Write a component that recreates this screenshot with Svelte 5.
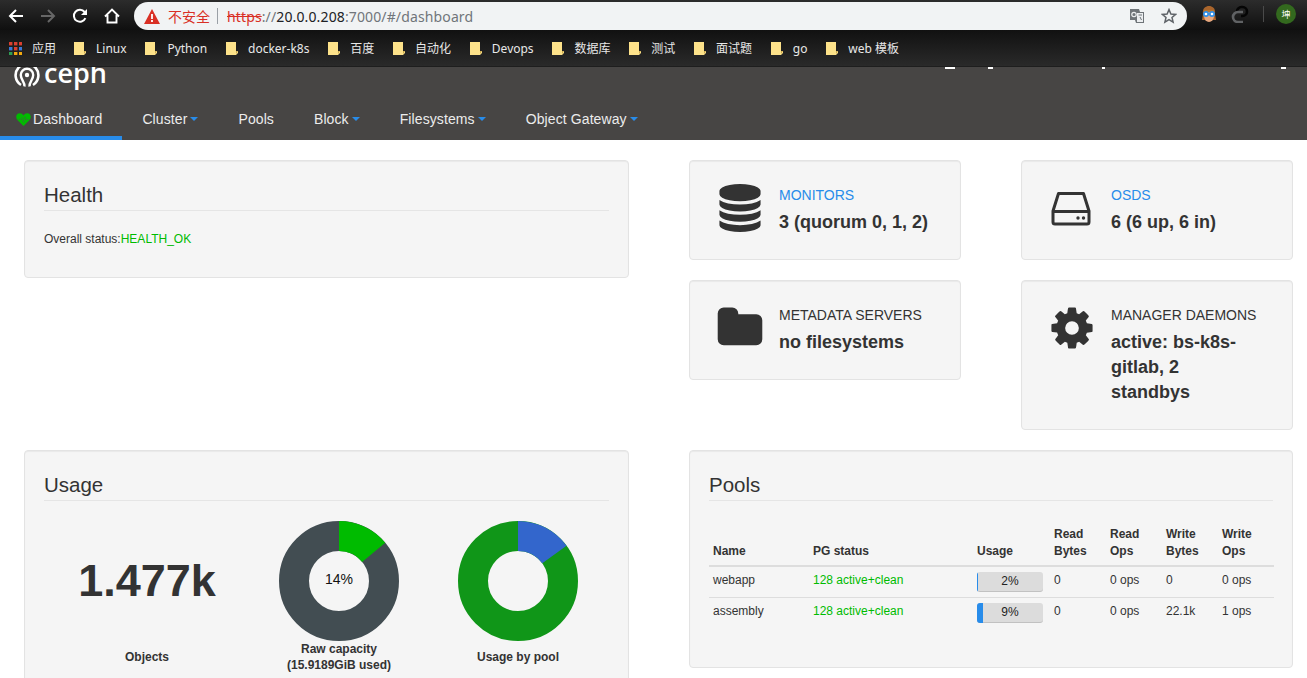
<script>
  const bookmarks = ["Linux", "Python", "docker-k8s", "百度", "自动化", "Devops", "数据库", "测试", "面试题", "go", "web 模板"];
  const navItems = [
    { label: "Dashboard", active: true },
    { label: "Cluster", caret: true },
    { label: "Pools" },
    { label: "Block", caret: true },
    { label: "Filesystems", caret: true },
    { label: "Object Gateway", caret: true }
  ];
  const pools = [
    { name: "webapp", usage: 2, wb: "0", wo: "0 ops" },
    { name: "assembly", usage: 9, wb: "22.1k", wo: "1 ops" }
  ];
</script>

<div class="page">
  <div class="toolbar">
    <svg class="tb-icon" viewBox="0 0 16 16"><path d="M15 8H2M8 2 2 8l6 6" fill="none" stroke="#fff" stroke-width="2" /></svg>
    <svg class="tb-icon" viewBox="0 0 16 16"><path d="M1 8h13M8 2l6 6-6 6" fill="none" stroke="#666" stroke-width="2" /></svg>
    <svg class="tb-icon" viewBox="0 0 16 16"><path d="M13.4 10.2A6 6 0 1 1 12.6 4" fill="none" stroke="#fff" stroke-width="2" /><path d="M15 1v6H9z" fill="#fff" /></svg>
    <svg class="tb-icon" viewBox="0 0 16 16"><path d="M1 8.5 8 1.5l7 7M3.5 7v7.5h9V7" fill="none" stroke="#fff" stroke-width="1.9" /></svg>
    <div class="omnibox">
      <svg class="warn" viewBox="0 0 16 15"><path d="M8 0 16 15H0z" fill="#d93025" /><path d="M7.1 5h1.8v5H7.1zM7.1 11h1.8v2H7.1z" fill="#fff" /></svg>
      <span class="insecure">不安全</span>
      <span class="omni-sep"></span>
      <span class="url"><s>https</s><span class="dim">://</span>20.0.0.208<span class="dim">:7000/#/dashboard</span></span>
      <svg class="translate" viewBox="0 0 16 16"><path d="M1 1h9l1 3h4v11H7l-1-3H1z" fill="#6f7478" /><path d="M8 5h6v9H8z" fill="#eceef0" /><circle cx="5" cy="6.5" r="2.2" fill="none" stroke="#eceef0" stroke-width="1.2" /><path d="M9.5 7h3.5M11 9l1.5 3" stroke="#6f7478" fill="none" /></svg>
      <svg class="star" viewBox="0 0 16 16"><path d="M8 1.6 9.9 6l4.7.4-3.6 3.1 1.1 4.6L8 11.7l-4.1 2.4L5 9.5 1.4 6.4 6.1 6z" fill="none" stroke="#5f6368" stroke-width="1.5" /></svg>
    </div>
    <div class="extensions">
      <svg class="ext-face" viewBox="0 0 16 18"><path d="M2 9C1 3 5 1 8 1s7 2 6 8l1 6H1z" fill="#a9652c" /><ellipse cx="8" cy="11" rx="5" ry="6" fill="#e8a77d" /><path d="M3 5h10v2H3z" fill="#b5752f" /><circle cx="5" cy="9" r="3" fill="#2f8fe8" /><circle cx="11" cy="9" r="3" fill="#2f8fe8" /><circle cx="5" cy="9" r="1.3" fill="#fff" /><circle cx="11" cy="9" r="1.3" fill="#fff" /></svg>
      <svg class="ext-c" viewBox="0 0 18 18"><path d="M6 6.5A4.5 4.5 0 0 1 10.5 2h1A4.5 4.5 0 0 1 16 6.5 4.5 4.5 0 0 1 11.5 11H10" fill="none" stroke="#050505" stroke-width="2.6" /><path d="M12 7H7a5 5 0 0 0 0 10h5" fill="none" stroke="#606264" stroke-width="2.6" /></svg>
      <span class="ext-sep"></span>
      <span class="avatar">坤</span>
    </div>
  </div>

  <div class="bookmarks">
    <svg class="apps" viewBox="0 0 13 13">
      {#each [["#d9402f", "#d9402f", "#d9402f"], ["#3a79d8", "#d9402f", "#3a79d8"], ["#2f9e52", "#f2a80f", "#f2a80f"]] as row, y}
        {#each row as fill, x}
          <rect x={x * 5} y={y * 5} width="3.4" height="3.4" {fill} />
        {/each}
      {/each}
    </svg>
    <span class="bm-apps">应用</span>
    {#each bookmarks as name}
      <span class="bm">
        <svg class="bm-folder" viewBox="0 0 12 13"><path d="M0 0h10v9h2v2l-2 2H0z" fill="#fde28a" /><path d="M10 9h2l-2 3z" fill="#c9a74c" /></svg>
        {name}
      </span>
    {/each}
  </div>

  <header class="navbar">
    <div class="clipped-marks">
      <i class="m1"></i><i class="m2"></i><i class="m3"></i><i class="m4"></i>
    </div>
    <div class="brand">
      <svg class="logo" viewBox="0 0 26 26">
        <path d="M7 24A11.400 11.400 0 1 1 19 24" fill="none" stroke="#fff" stroke-width="2.600" />
        <path d="M10.500 25.500C11 21 6.800 19 6.800 14a6.200 6.200 0 0 1 12.400 0c0 5-4.200 7-3.700 11.500" fill="none" stroke="#fff" stroke-width="2.400" />
        <circle cx="13" cy="14" r="2.200" fill="#fff" />
      </svg>
      <span class="wordmark">ceph</span>
    </div>
    <nav class="tabs">
      {#each navItems as item}
        <a class="tab" class:active={item.active} href="#/">
          {#if item.active}
            <svg class="heart" viewBox="0 0 16 14"><path d="M8 14 1.2 7.2C-1 4.600.4.400 4 .4c1.800 0 3 .8 4 2.200C9 1.200 10.200.4 12 .4c3.600 0 5 4.200 2.800 6.800z" fill="#00bb00" /><path d="M2 7h3.500l1-2 1.500 5 1.500-6 1 3H14" fill="none" stroke="#3d6b3d" stroke-width=".6" /></svg>
          {/if}
          <span>{item.label}</span>
          {#if item.caret}<span class="caret"></span>{/if}
        </a>
      {/each}
    </nav>
  </header>

  <main class="content">
    <section class="well health">
      <h2>Health</h2>
      <p class="status">Overall status:<span class="ok">HEALTH_OK</span></p>
    </section>

    <div class="info-grid">
      <section class="well info">
        <svg class="info-icon" viewBox="0 0 1792 1792"><path d="M896 768q237 0 443-43t325-127v170q0 69-103 128t-280 93.500-385 34.500-385-34.500-280-93.500-103-128v-170q119 84 325 127t443 43zm0 768q237 0 443-43t325-127v170q0 69-103 128t-280 93.500-385 34.500-385-34.500-280-93.500-103-128v-170q119 84 325 127t443 43zm0-384q237 0 443-43t325-127v170q0 69-103 128t-280 93.500-385 34.500-385-34.500-280-93.500-103-128v-170q119 84 325 127t443 43zm0-1152q208 0 385 34.500t280 93.500 103 128v128q0 69-103 128t-280 93.500-385 34.500-385-34.500-280-93.500-103-128v-128q0-69 103-128t280-93.500 385-34.500z" /></svg>
        <div class="info-text">
          <a class="info-label link" href="#/">MONITORS</a>
          <div class="info-value">3 (quorum 0, 1, 2)</div>
        </div>
      </section>
      <section class="well info">
        <svg class="info-icon" viewBox="0 0 48 48"><path d="M5 27 10.500 9.500h25L41 27v11a2 2 0 0 1-2 2H7a2 2 0 0 1-2-2z" fill="none" stroke="#333" stroke-width="3" stroke-linejoin="round" /><path d="M5 27.500h36" stroke="#333" stroke-width="3" /><circle cx="30" cy="34" r="1.700" fill="#333" /><circle cx="35.500" cy="34" r="1.700" fill="#333" /></svg>
        <div class="info-text">
          <a class="info-label link" href="#/">OSDS</a>
          <div class="info-value">6 (6 up, 6 in)</div>
        </div>
      </section>
      <section class="well info">
        <svg class="info-icon" viewBox="0 0 1792 1792"><path d="M1728 608v704q0 92-66 158t-158 66h-1216q-92 0-158-66t-66-158v-960q0-92 66-158t158-66h320q92 0 158 66t66 158v32h672q92 0 158 66t66 158z" /></svg>
        <div class="info-text">
          <div class="info-label">METADATA SERVERS</div>
          <div class="info-value">no filesystems</div>
        </div>
      </section>
      <section class="well info tall">
        <svg class="info-icon" viewBox="0 0 1792 1792"><path d="M1152 896q0-106-75-181t-181-75-181 75-75 181 75 181 181 75 181-75 75-181zm512-109v222q0 12-8 23t-20 13l-185 28q-19 54-39 91 35 50 107 138 10 12 10 25t-9 23q-27 37-99 108t-94 71q-12 0-26-9l-138-108q-44 23-91 38-16 136-29 186-7 28-36 28h-222q-14 0-24.500-8.500t-11.500-21.500l-28-184q-49-16-90-37l-141 107q-10 9-25 9-14 0-25-11-126-114-165-168-7-10-7-23 0-12 8-23 15-21 51-66.500t54-70.500q-27-50-41-99l-183-27q-13-2-21-12.500t-8-23.500v-222q0-12 8-23t19-13l186-28q14-46 39-92-40-57-107-138-10-12-10-24 0-10 9-23 26-36 98.500-107.500t94.500-71.500q13 0 26 10l138 107q44-23 91-38 16-136 29-186 7-28 36-28h222q14 0 24.500 8.500t11.500 21.500l28 184q49 16 90 37l142-107q9-9 24-9 13 0 25 10 129 119 165 170 7 8 7 22 0 12-8 23-15 21-51 66.500t-54 70.500q26 50 41 98l183 28q13 2 21 12.500t8 23.500z" /></svg>
        <div class="info-text narrow">
          <div class="info-label">MANAGER DAEMONS</div>
          <div class="info-value">active: bs-k8s-gitlab, 2 standbys</div>
        </div>
      </section>
    </div>

    <section class="well usage">
      <h2>Usage</h2>
      <div class="usage-cols">
        <div class="usage-col">
          <div class="figure big">1.477k</div>
          <div class="caption">Objects</div>
        </div>
        <div class="usage-col">
          <div class="figure">
            <svg class="donut" viewBox="0 0 120 120">
              <circle cx="60" cy="60" r="45" pathLength="100" stroke="#424d52" />
              <circle cx="60" cy="60" r="45" pathLength="100" stroke="#00bb00" stroke-dasharray="14 86" />
              <text x="60" y="63">14%</text>
            </svg>
          </div>
          <div class="caption two">Raw capacity<br />(15.9189GiB used)</div>
        </div>
        <div class="usage-col">
          <div class="figure">
            <svg class="donut" viewBox="0 0 120 120">
              <circle cx="60" cy="60" r="45" pathLength="100" stroke="#109618" />
              <circle cx="60" cy="60" r="45" pathLength="100" stroke="#3366cc" stroke-dasharray="15 85" />
            </svg>
          </div>
          <div class="caption">Usage by pool</div>
        </div>
      </div>
    </section>

    <section class="well pools">
      <h2>Pools</h2>
      <table>
        <thead>
          <tr>
            <th class="c-name">Name</th>
            <th class="c-pg">PG status</th>
            <th class="c-usage">Usage</th>
            <th class="c-num">Read Bytes</th>
            <th class="c-num">Read Ops</th>
            <th class="c-num">Write Bytes</th>
            <th class="c-num">Write Ops</th>
          </tr>
        </thead>
        <tbody>
          {#each pools as pool}
            <tr>
              <td class="pool-name">{pool.name}</td>
              <td class="ok">128 active+clean</td>
              <td>
                <div class="progress">
                  <div class="progress-fill" style="width: {pool.usage}%"></div>
                  <span class="progress-text">{pool.usage}%</span>
                </div>
              </td>
              <td>0</td>
              <td>0 ops</td>
              <td>{pool.wb}</td>
              <td>{pool.wo}</td>
            </tr>
          {/each}
        </tbody>
      </table>
    </section>
  </main>
</div>

<style>
  :global(body) {
    margin: 0;
    background: #fff;
  }

  .page {
    height: 678px;
    overflow: hidden;
    font-family: "Liberation Sans", Arial, sans-serif;
    color: #333;
  }

  /* browser chrome */
  .toolbar {
    display: flex;
    align-items: flex-start;
    height: 30px;
    padding-left: 8px;
    box-sizing: border-box;
    background: linear-gradient(#2c2c2c, #0f0f0f);
  }

  .tb-icon {
    width: 16px;
    height: 16px;
    margin: 8px 16px 0 0;
    flex-shrink: 0;
  }

  .omnibox {
    display: flex;
    align-items: center;
    width: 1053px;
    height: 28px;
    margin: 2px 0 0 -2px;
    padding: 0 10px;
    box-sizing: border-box;
    background: #f1f3f4;
    border-radius: 14px;
    font-family: "Noto Sans", "Noto Sans CJK SC", sans-serif;
    font-size: 14px;
  }

  .warn {
    width: 16px;
    height: 15px;
    flex-shrink: 0;
  }

  .insecure {
    margin-left: 8px;
    font-size: 14px;
    color: #d93025;
    font-family: "Noto Sans CJK SC", sans-serif;
  }

  .omni-sep {
    width: 1px;
    height: 16px;
    margin: 0 9px 0 7px;
    background: #9aa0a6;
  }

  .url {
    flex: 1;
    color: #202124;
    letter-spacing: 0.13px;
  }

  .url s {
    color: #d93025;
  }

  .dim {
    color: #70757a;
  }

  .translate {
    width: 16px;
    height: 16px;
    margin-right: 16px;
  }

  .star {
    width: 16px;
    height: 16px;
  }

  .extensions {
    display: flex;
    align-items: center;
    height: 28px;
    margin-left: 14px;
  }

  .ext-face {
    width: 16px;
    height: 18px;
  }

  .ext-c {
    width: 18px;
    height: 18px;
    margin-left: 14px;
  }

  .ext-sep {
    width: 1px;
    height: 16px;
    margin: 0 12px 0 14px;
    background: #4a4a4a;
  }

  .avatar {
    display: grid;
    place-items: center;
    width: 20px;
    height: 20px;
    border-radius: 50%;
    background: #33691e;
    color: #fff;
    font-family: "Noto Sans CJK SC", sans-serif;
    font-size: 9px;
  }

  .bookmarks {
    display: flex;
    align-items: center;
    height: 37px;
    padding-left: 9px;
    box-sizing: border-box;
    background: linear-gradient(#111, #2a2a2a);
    border-bottom: 1px solid #1e1e1e;
    color: #e8e8e8;
    font-family: "Noto Sans", "Noto Sans CJK SC", sans-serif;
    font-size: 12px;
  }

  .apps {
    width: 13px;
    height: 13px;
  }

  .bm-apps {
    margin: 0 18px 0 10px;
  }

  .bm {
    display: flex;
    align-items: center;
    gap: 10px;
    margin-right: 18.8px;
  }

  .bm-folder {
    width: 12px;
    height: 13px;
  }

  /* dashboard navbar, its top is hidden under the bookmarks bar */
  .navbar {
    position: relative;
    background: #474544;
  }

  .clipped-marks i {
    position: absolute;
    top: 0;
    height: 2px;
    background: #fff;
  }

  .m1 { left: 945px; width: 10px; }
  .m2 { left: 988px; width: 5px; }
  .m3 { left: 1102px; width: 3px; }
  .m4 { left: 1281px; width: 5px; }

  .brand {
    display: flex;
    align-items: flex-end;
    height: 33px;
    padding: 0 0 13px 14px;
    box-sizing: border-box;
    overflow: hidden;
  }

  .logo {
    width: 26px;
    height: 26px;
    flex-shrink: 0;
  }

  .wordmark {
    margin: 0 0 1px 4px;
    color: #fff;
    font-family: "Open Sans", sans-serif;
    font-size: 27px;
    font-weight: 600;
    line-height: 26px;
  }

  .tabs {
    display: flex;
    height: 40px;
  }

  .tab {
    display: flex;
    align-items: center;
    height: 40px;
    padding: 0 20px 2px;
    box-sizing: border-box;
    color: #ececec;
    font-size: 14px;
    letter-spacing: 0.1px;
    text-decoration: none;
  }

  .tab.active {
    padding: 2px 20px 0 16px;
    border-bottom: 4px solid #288cea;
  }

  .heart {
    width: 15px;
    height: 13px;
    margin-right: 2px;
  }

  .caret {
    width: 0;
    height: 0;
    margin-left: 3px;
    border: 4px solid transparent;
    border-top-color: #288cea;
    border-bottom: 0;
  }

  /* page content */
  .content {
    display: grid;
    grid-template-columns: 605px 604px;
    column-gap: 60px;
    row-gap: 20px;
    padding: 20px 14px 0 24px;
    align-items: start;
  }

  .well {
    box-sizing: border-box;
    background: #f5f5f5;
    border: 1px solid #e3e3e3;
    border-radius: 4px;
    box-shadow: inset 0 1px 1px rgba(0, 0, 0, 0.05);
    padding: 19px;
  }

  h2 {
    margin: 0;
    padding: 2px 0 2px;
    border-bottom: 1px solid #e5e5e5;
    font-size: 20.5px;
    font-weight: 400;
    line-height: 26px;
    color: #333;
  }

  .health {
    height: 118px;
  }

  .status {
    margin: 20px 0 0;
    font-size: 12px;
    line-height: 17px;
  }

  .ok {
    color: #00bb00;
  }

  .info-grid {
    display: grid;
    grid-template-columns: 272px 272px;
    column-gap: 60px;
    row-gap: 20px;
    align-items: start;
  }

  .info {
    display: flex;
    align-items: flex-start;
    gap: 15px;
    min-height: 100px;
    padding: 24px 26px 12px;
  }

  .info.tall {
    min-height: 150px;
  }

  .info-icon {
    width: 48px;
    height: 48px;
    margin-top: -1px;
    flex-shrink: 0;
    fill: #333;
  }

  .narrow {
    width: 150px;
  }

  .info-label {
    display: block;
    font-size: 14px;
    line-height: 20px;
    color: #333;
    text-decoration: none;
  }

  .info-label.link {
    color: #288cea;
  }

  .info-value {
    margin-top: 5px;
    font-size: 18px;
    font-weight: 700;
    line-height: 25px;
    color: #333;
  }

  .usage {
    height: 300px;
  }

  .usage-cols {
    display: grid;
    grid-template-columns: 206px 178px 180px;
    margin-top: 20px;
  }

  .usage-col {
    display: flex;
    flex-direction: column;
    align-items: center;
  }

  .figure {
    display: flex;
    align-items: center;
    justify-content: center;
    height: 120px;
  }

  .big {
    font-size: 45px;
    font-weight: 700;
  }

  .donut {
    width: 120px;
    height: 120px;
    display: block;
  }

  .donut circle {
    fill: none;
    stroke-width: 30;
    transform: rotate(-90deg);
    transform-origin: 60px 60px;
  }

  .donut text {
    font-size: 14px;
    fill: #111;
    text-anchor: middle;
  }

  .caption {
    margin-top: 8px;
    font-size: 12px;
    font-weight: 700;
    line-height: 16px;
    text-align: center;
  }

  .caption.two {
    margin-top: 0;
  }

  .pools {
    height: 218px;
  }

  table {
    width: 100%;
    margin-top: 20px;
    border-collapse: collapse;
    table-layout: fixed;
    font-size: 12px;
  }

  th {
    padding: 5px 4px;
    border-bottom: 2px solid #ddd;
    text-align: left;
    vertical-align: bottom;
    font-weight: 700;
    line-height: 17px;
  }

  td {
    padding: 5px 4px;
    border-bottom: 1px solid #ddd;
    vertical-align: top;
    line-height: 17px;
  }

  tbody tr:last-child td {
    border-bottom: 0;
  }

  .c-name { width: 92px; }
  .c-pg { width: 156px; }
  .c-usage { width: 69px; }
  .c-num { width: 48px; }

  .progress {
    position: relative;
    width: 66px;
    height: 20px;
    background: #dcdcdc;
    border-radius: 3px;
    overflow: hidden;
    box-shadow: inset 0 -1px 0 rgba(0, 0, 0, 0.12);
  }

  .progress-fill {
    height: 100%;
    background: #288cea;
  }

  .progress-text {
    position: absolute;
    inset: 0;
    text-align: center;
    line-height: 19px;
    color: #222;
  }
</style>
